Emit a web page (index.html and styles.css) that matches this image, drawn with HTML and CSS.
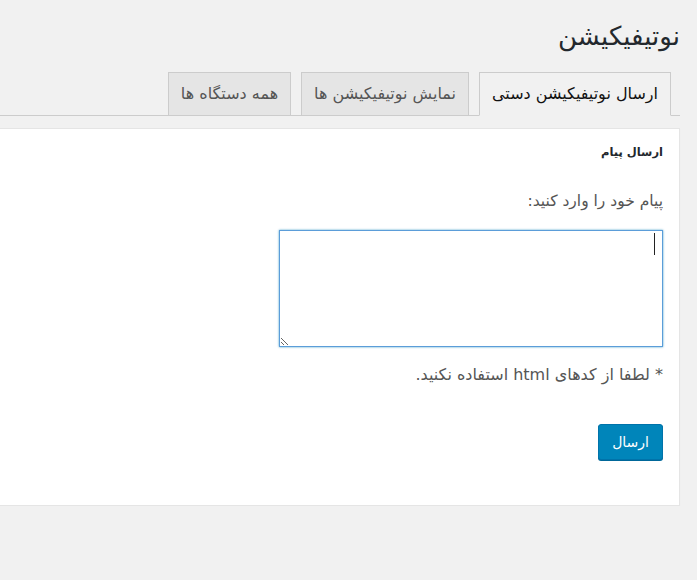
FILE: index.html
```html
<!DOCTYPE html>
<html lang="fa" dir="rtl">
<head>
    <meta charset="utf-8">
    <title>نوتیفیکیشن</title>
    <link rel="stylesheet" href="styles.css">
</head>
<body>
<div class="wrap">
    <h1>نوتیفیکیشن</h1>

    <div class="nav-tabs">
        <a href="#send" class="nav-tab active">ارسال نوتیفیکیشن دستی</a>
        <a href="#list" class="nav-tab">نمایش نوتیفیکیشن ها</a>
        <a href="#devices" class="nav-tab">همه دستگاه ها</a>
    </div>

    <div class="panel" id="send">
        <h2>ارسال پیام</h2>
        <p class="label">پیام خود را وارد کنید:</p>
        <div class="field">
            <textarea class="message focused"></textarea>
            <span class="caret"></span>
        </div>
        <p class="note">* لطفا از کدهای html استفاده نکنید.</p>
        <button class="button-primary">ارسال</button>
    </div>
</div>
</body>
</html>
```

FILE: styles.css
```css
body {
    margin: 0;
    background: #f1f1f1;
    color: #444;
    font-family: Tahoma, "DejaVu Sans", sans-serif;
    font-size: 13px;
    direction: rtl;
}

.wrap {
    margin-right: 17px;
    margin-left: -2px;
}

h1 {
    margin: 22px 0 0;
    font-size: 26px;
    font-weight: normal;
    line-height: 29px;
    color: #23282d;
}

.nav-tabs {
    display: flex;
    gap: 10px;
    margin-top: 21px;
    padding-right: 9px;
    border-bottom: 1px solid #ccc;
}

.nav-tab {
    display: block;
    margin-bottom: -1px;
    padding: 10px 12px;
    font-size: 16px;
    line-height: 22px;
    color: #555;
    text-decoration: none;
    background: #e5e5e5;
    border: 1px solid #ccc;
}

.nav-tab.active {
    color: #111;
    background: #f1f1f1;
    border-bottom-color: #f1f1f1;
}

.panel {
    margin-top: 12px;
    padding: 0 16px 45px;
    background: #fff;
    border: 1px solid #e5e5e5;
    box-shadow: 0 1px 1px rgba(0, 0, 0, .04);
}

.panel h2 {
    margin: 0;
    padding-top: 13px;
    font-size: 11.5px;
    line-height: 20px;
    color: #23282d;
}

.label {
    margin: 28px 0 0;
    font-size: 15.5px;
    line-height: 22px;
    color: #555;
}

.field {
    position: relative;
    width: 384px;
    margin-top: 18px;
}

.message {
    display: block;
    box-sizing: border-box;
    width: 384px;
    height: 117px;
    margin: 0;
    padding: 2px 6px;
    border: 1px solid #ddd;
    background: #fff;
    font: inherit;
}

.message.focused {
    border-color: #5b9dd9;
    box-shadow: 0 0 2px rgba(30, 140, 190, .8);
    outline: none;
}

.caret {
    position: absolute;
    top: 3px;
    right: 8px;
    width: 1px;
    height: 22px;
    background: #222;
}

.note {
    margin: 17px 0 0;
    font-size: 16px;
    line-height: 22px;
    color: #555;
}

.button-primary {
    display: block;
    margin-top: 38px;
    height: 36px;
    padding: 0 13px;
    font: inherit;
    font-size: 14px;
    color: #fff;
    background: #0085ba;
    border: 1px solid #0073aa;
    border-radius: 3px;
    box-shadow: 0 1px 0 #006799;
}
```
